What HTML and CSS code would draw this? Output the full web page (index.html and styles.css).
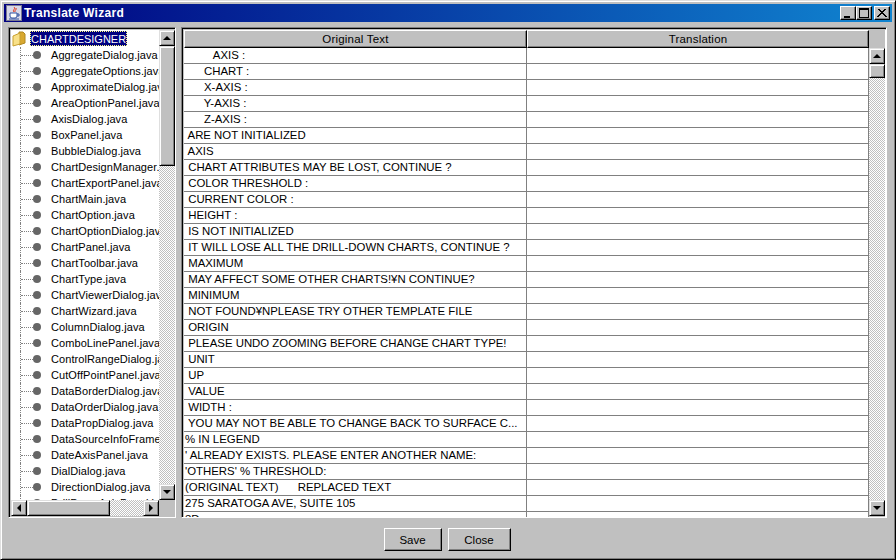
FILE: index.html
```html
<!DOCTYPE html>
<html lang="en">
<head>
<meta charset="utf-8">
<title>Translate Wizard</title>
<link rel="stylesheet" href="styles.css">
</head>
<body>
<div class="window">
  <div class="titlebar">
    <svg class="appicon" width="16" height="16" viewBox="0 0 16 16"><rect x=".5" y=".5" width="15" height="15" fill="#d8d8e8" stroke="#7a7a90"/><path d="M8 2c2 2-2 3 0 5M10 3c1 2-2 2-1 4" stroke="#e03010" fill="none"/><path d="M4 8h7v3a2 2 0 0 1-2 2H6a2 2 0 0 1-2-2z" fill="#fff" stroke="#3050a0"/><path d="M11 9h2v2h-2" fill="none" stroke="#3050a0"/><path d="M3 14h10" stroke="#3050a0"/></svg>
    <span class="title">Translate Wizard</span>
    <div class="wbtns">
      <button class="wbtn"><svg width="12" height="10" viewBox="0 0 12 10"><path d="M2 8h6v2H2z" fill="#000"/></svg></button>
      <button class="wbtn"><svg width="12" height="10" viewBox="0 0 12 10"><path d="M1 0h10v10H1zM2 2v7h8V2z" fill="#000" fill-rule="evenodd"/></svg></button>
      <button class="wbtn close"><svg width="12" height="10" viewBox="0 0 12 10"><path d="M2 1l8 8M3 1l8 8M10 1L2 9M9 1L1 9" stroke="#000" fill="none"/></svg></button>
    </div>
  </div>
  <div class="content">
    <div class="panel treepanel">
      <div class="tree" id="tree">
        <div class="root"><svg class="folder" width="16" height="16" viewBox="0 0 16 16"><path d="M8 1h4l2 2v9l-6 2z" fill="#d8a830" stroke="#b08820"/><path d="M2 5l7-3v11l-7 2z" fill="#f8e088" stroke="#c8a030"/></svg><span class="rootlabel">CHARTDESIGNER</span></div>
        <div class="node"><span class="line"></span><i class="dot"></i><span>AggregateDialog.java</span></div>
        <div class="node"><span class="line"></span><i class="dot"></i><span>AggregateOptions.java</span></div>
        <div class="node"><span class="line"></span><i class="dot"></i><span>ApproximateDialog.java</span></div>
        <div class="node"><span class="line"></span><i class="dot"></i><span>AreaOptionPanel.java</span></div>
        <div class="node"><span class="line"></span><i class="dot"></i><span>AxisDialog.java</span></div>
        <div class="node"><span class="line"></span><i class="dot"></i><span>BoxPanel.java</span></div>
        <div class="node"><span class="line"></span><i class="dot"></i><span>BubbleDialog.java</span></div>
        <div class="node"><span class="line"></span><i class="dot"></i><span>ChartDesignManager.java</span></div>
        <div class="node"><span class="line"></span><i class="dot"></i><span>ChartExportPanel.java</span></div>
        <div class="node"><span class="line"></span><i class="dot"></i><span>ChartMain.java</span></div>
        <div class="node"><span class="line"></span><i class="dot"></i><span>ChartOption.java</span></div>
        <div class="node"><span class="line"></span><i class="dot"></i><span>ChartOptionDialog.java</span></div>
        <div class="node"><span class="line"></span><i class="dot"></i><span>ChartPanel.java</span></div>
        <div class="node"><span class="line"></span><i class="dot"></i><span>ChartToolbar.java</span></div>
        <div class="node"><span class="line"></span><i class="dot"></i><span>ChartType.java</span></div>
        <div class="node"><span class="line"></span><i class="dot"></i><span>ChartViewerDialog.java</span></div>
        <div class="node"><span class="line"></span><i class="dot"></i><span>ChartWizard.java</span></div>
        <div class="node"><span class="line"></span><i class="dot"></i><span>ColumnDialog.java</span></div>
        <div class="node"><span class="line"></span><i class="dot"></i><span>ComboLinePanel.java</span></div>
        <div class="node"><span class="line"></span><i class="dot"></i><span>ControlRangeDialog.java</span></div>
        <div class="node"><span class="line"></span><i class="dot"></i><span>CutOffPointPanel.java</span></div>
        <div class="node"><span class="line"></span><i class="dot"></i><span>DataBorderDialog.java</span></div>
        <div class="node"><span class="line"></span><i class="dot"></i><span>DataOrderDialog.java</span></div>
        <div class="node"><span class="line"></span><i class="dot"></i><span>DataPropDialog.java</span></div>
        <div class="node"><span class="line"></span><i class="dot"></i><span>DataSourceInfoFrame.java</span></div>
        <div class="node"><span class="line"></span><i class="dot"></i><span>DateAxisPanel.java</span></div>
        <div class="node"><span class="line"></span><i class="dot"></i><span>DialDialog.java</span></div>
        <div class="node"><span class="line"></span><i class="dot"></i><span>DirectionDialog.java</span></div>
        <div class="node"><span class="line"></span><i class="dot"></i><span>DrillDownAxisPanel.java</span></div>
      </div>
      <div class="vbar treev">
        <button class="sbtn"><b class="up"></b></button>
        <div class="thumb tv"></div>
        <div class="track"></div>
        <button class="sbtn"><b class="down"></b></button>
      </div>
      <div class="hbar">
        <button class="sbtn"><b class="left"></b></button>
        <div class="thumb th"></div>
        <div class="track"></div>
        <button class="sbtn"><b class="right"></b></button>
      </div>
      <div class="corner"></div>
    </div>
    <div class="panel tablepanel">
      <div class="tablewrap">
        <div class="thead"><div class="th1">Original Text</div><div class="th2">Translation</div></div>
        <div class="tbody">
          <div class="row"><div>         AXIS :</div><div></div></div>
          <div class="row"><div>      CHART :</div><div></div></div>
          <div class="row"><div>      X-AXIS :</div><div></div></div>
          <div class="row"><div>      Y-AXIS :</div><div></div></div>
          <div class="row"><div>      Z-AXIS :</div><div></div></div>
          <div class="row"><div> ARE NOT INITIALIZED</div><div></div></div>
          <div class="row"><div> AXIS</div><div></div></div>
          <div class="row"><div> CHART ATTRIBUTES MAY BE LOST, CONTINUE ?</div><div></div></div>
          <div class="row"><div> COLOR THRESHOLD :</div><div></div></div>
          <div class="row"><div> CURRENT COLOR :</div><div></div></div>
          <div class="row"><div> HEIGHT :</div><div></div></div>
          <div class="row"><div> IS NOT INITIALIZED</div><div></div></div>
          <div class="row"><div> IT WILL LOSE ALL THE DRILL-DOWN CHARTS, CONTINUE ?</div><div></div></div>
          <div class="row"><div> MAXIMUM</div><div></div></div>
          <div class="row"><div> MAY AFFECT SOME OTHER CHARTS!¥N CONTINUE?</div><div></div></div>
          <div class="row"><div> MINIMUM</div><div></div></div>
          <div class="row"><div> NOT FOUND¥NPLEASE TRY OTHER TEMPLATE FILE</div><div></div></div>
          <div class="row"><div> ORIGIN</div><div></div></div>
          <div class="row"><div> PLEASE UNDO ZOOMING BEFORE CHANGE CHART TYPE!</div><div></div></div>
          <div class="row"><div> UNIT</div><div></div></div>
          <div class="row"><div> UP</div><div></div></div>
          <div class="row"><div> VALUE</div><div></div></div>
          <div class="row"><div> WIDTH :</div><div></div></div>
          <div class="row"><div> YOU MAY NOT BE ABLE TO CHANGE BACK TO SURFACE C...</div><div></div></div>
          <div class="row"><div>% IN LEGEND</div><div></div></div>
          <div class="row"><div>' ALREADY EXISTS. PLEASE ENTER ANOTHER NAME:</div><div></div></div>
          <div class="row"><div>'OTHERS' % THRESHOLD:</div><div></div></div>
          <div class="row"><div>(ORIGINAL TEXT)      REPLACED TEXT</div><div></div></div>
          <div class="row"><div>275 SARATOGA AVE, SUITE 105</div><div></div></div>
          <div class="row"><div>3D</div><div></div></div>
        </div>
      </div>
      <div class="tableside">
        <div class="cornerhead"></div>
        <div class="vbar tablev">
          <button class="sbtn"><b class="up"></b></button>
          <div class="thumb tt"></div>
          <div class="track"></div>
          <button class="sbtn"><b class="down"></b></button>
        </div>
      </div>
    </div>
  </div>
  <div class="footer">
    <button class="btn save">Save</button>
    <button class="btn closebtn">Close</button>
  </div>
</div>
</body>
</html>
```
FILE: styles.css
```css
* { box-sizing: border-box; }
html, body { margin: 0; padding: 0; background: #c0c0c0; }
body { width: 896px; height: 560px; overflow: hidden; font-family: "Liberation Sans", Arial, sans-serif; font-size: 12px; color: #000; }
button { padding: 0; margin: 0; font: inherit; color: inherit; }
.window { width: 896px; height: 560px; display: flex; flex-direction: column; background: #c0c0c0;
  border: 1px solid; border-color: #dfdfdf #000 #000 #dfdfdf; box-shadow: inset 1px 1px 0 #fff, inset -1px -1px 0 #808080; padding: 3px; }
.titlebar { height: 18px; display: flex; align-items: center; padding: 0 2px; flex: none;
  background: linear-gradient(90deg, #000080, #1084d0); color: #fff; }
.appicon { flex: none; margin-right: 2px; }
.title { font-weight: bold; font-size: 12px; letter-spacing: .3px; flex: 1; white-space: nowrap; }
.wbtns { display: flex; }
.wbtn { width: 16px; height: 14px; display: flex; align-items: center; justify-content: center; background: #c0c0c0; border: 1px solid; border-color: #fff #000 #000 #fff; box-shadow: inset -1px -1px 0 #808080; }
.wbtn.close { margin-left: 2px; }
.content { flex: none; height: 491px; margin-top: 5px; padding-left: 4px; display: flex; gap: 5px; }
.panel { flex: none; border: 1px solid; border-color: #808080 #fff #fff #808080; box-shadow: inset 1px 1px 0 #000; padding: 2px 0 0 2px; }
.treepanel { width: 168px; display: grid; grid-template-columns: 148px 16px; grid-template-rows: 470px 16px; }
.tree { background: #fff; overflow: hidden; font-size: 11px; }
.root { height: 17px; display: flex; align-items: center; }
.folder { flex: none; margin: 0 3px 0 0; }
.rootlabel { background: #000080; color: #fff; padding: 0 1px; height: 15px; line-height: 16px; outline: 1px dotted #ffff80; outline-offset: -1px; }
.node { height: 16px; display: flex; align-items: center; white-space: nowrap; margin-left: 9px; border-left: 1px dotted #808080; letter-spacing: .08px; }
.line { width: 12px; flex: none; border-top: 1px dotted #808080; }
.dot { width: 8px; height: 8px; border-radius: 50%; background: #666; flex: none; margin-right: 10px; }
.vbar { display: flex; flex-direction: column; }
.hbar { display: flex; }
.treev { grid-row: 1; grid-column: 2; }
.sbtn { flex: none; width: 16px; height: 16px; display: flex; align-items: center; justify-content: center; background: #c0c0c0; border: 1px solid; border-color: #dfdfdf #000 #000 #dfdfdf; box-shadow: inset 1px 1px 0 #fff, inset -1px -1px 0 #808080; }
.thumb { flex: none; background: #c0c0c0; border: 1px solid; border-color: #dfdfdf #000 #000 #dfdfdf; box-shadow: inset 1px 1px 0 #fff, inset -1px -1px 0 #808080; }
.track { flex: 1; background: repeating-conic-gradient(#c0c0c0 0 25%, #fff 0 50%) 0 0 / 2px 2px; }
.tv { height: 120px; }
.th { width: 83px; }
.tt { height: 14px; }
.up, .down, .left, .right { display: block; width: 0; height: 0; border-style: solid; border-color: transparent; }
.up { border-width: 0 4px 4px; border-bottom-color: #000; }
.down { border-width: 4px 4px 0; border-top-color: #000; }
.left { border-width: 4px 4px 4px 0; border-right-color: #000; }
.right { border-width: 4px 0 4px 4px; border-left-color: #000; }
.tablepanel { width: 706px; display: flex; }
.tablewrap { flex: none; width: 685px; display: flex; flex-direction: column; overflow: hidden; }
.thead { height: 18px; display: flex; flex: none; }
.thead div { background: #c0c0c0; border: 1px solid; border-color: #fff #000 #000 #fff; box-shadow: inset -1px -1px 0 #808080; text-align: center; line-height: 16px; font-size: 11.5px; letter-spacing: .2px; }
.th1 { width: 343px; }
.th2 { width: 342px; }
.tbody { flex: 1; background: #fff; overflow: hidden; }
.row { height: 16px; display: flex; border-bottom: 1px solid #808080; font-size: 11.4px; }
.row div { height: 15px; line-height: 15px; white-space: pre; overflow: hidden; padding-left: 1px; border-right: 1px solid #808080; }
.row div:first-child { width: 343px; }
.row div:last-child { width: 342px; }
.tableside { flex: none; width: 17px; display: flex; flex-direction: column; border-right: 1px solid #fff; }
.cornerhead { height: 18px; flex: none; background: #c0c0c0; }
.tablev { height: 468px; }
.footer { flex: 1; display: flex; justify-content: center; gap: 6px; padding: 10px 2px 0 0; }
.btn { height: 23px; background: #c0c0c0; border: 1px solid; border-color: #fff #000 #000 #fff; box-shadow: inset -1px -1px 0 #808080; font-size: 11.5px; }
.save { width: 58px; }
.closebtn { width: 63px; }
```
